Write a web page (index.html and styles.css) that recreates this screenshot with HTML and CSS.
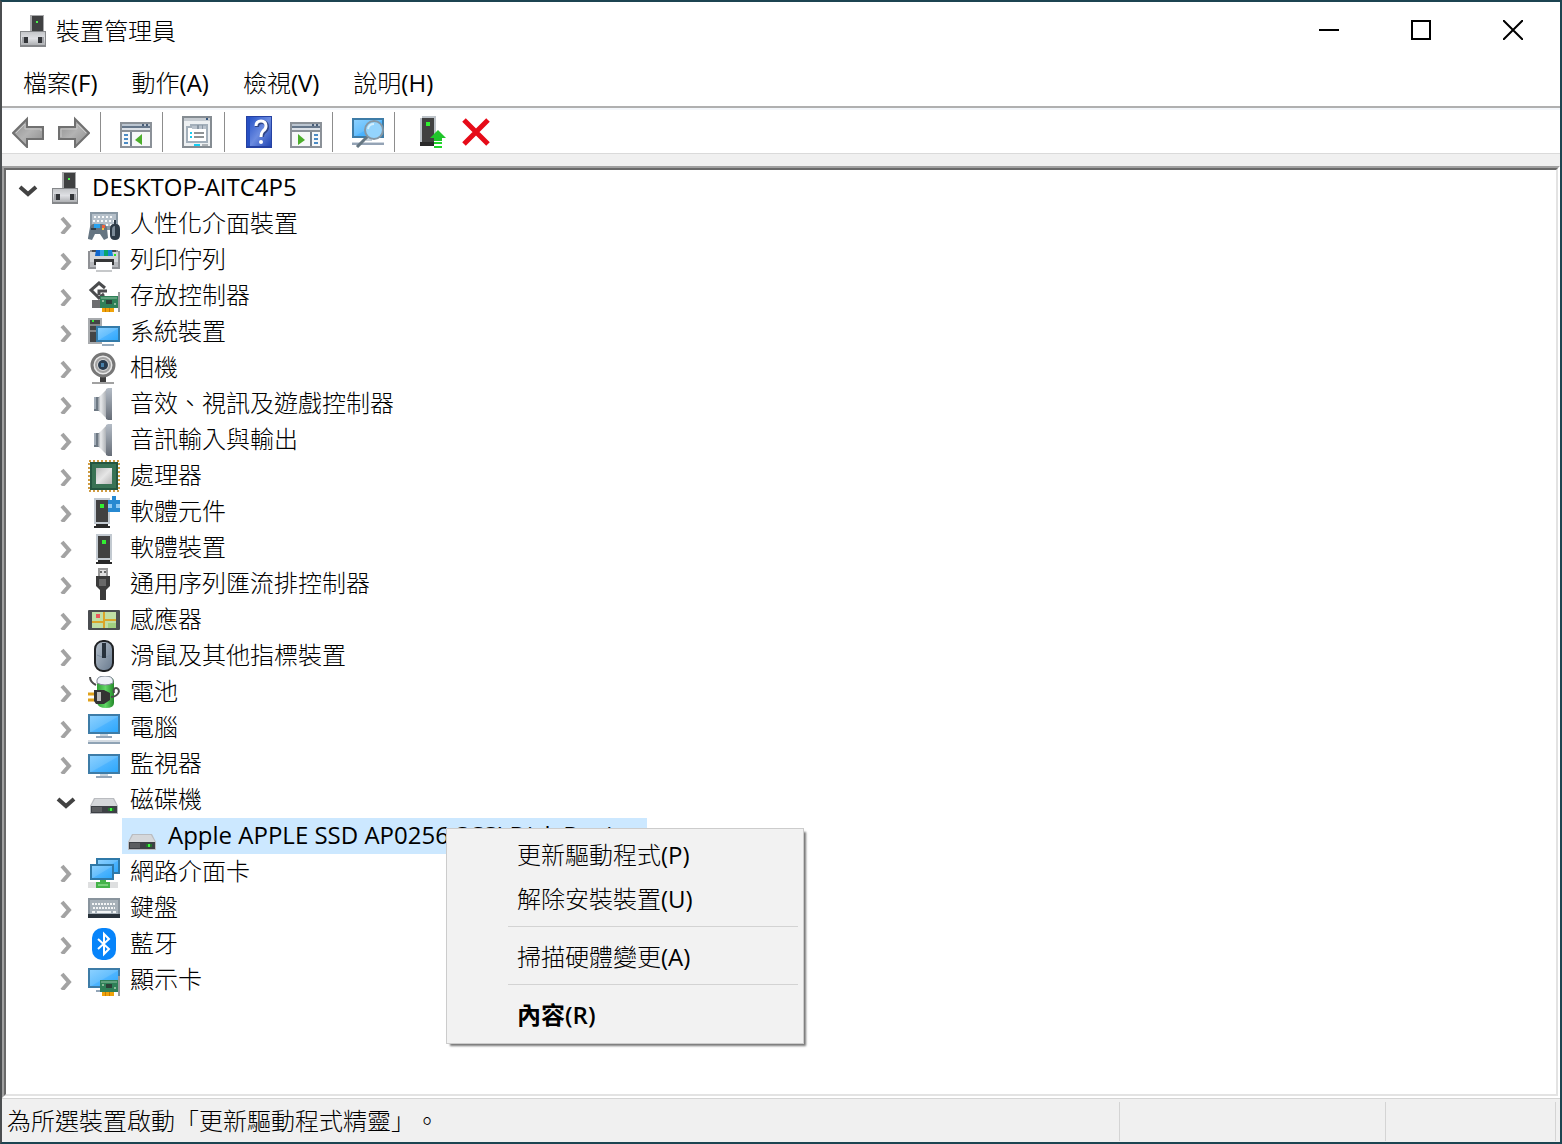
FILE: index.html
```html
<!DOCTYPE html>
<html lang="zh-Hant">
<head>
<meta charset="utf-8">
<meta name="viewport" content="width=device-width, initial-scale=1">
<title>裝置管理員</title>
<link rel="stylesheet" href="styles.css">
</head>
<body>
<svg class="sprite" width="0" height="0" aria-hidden="true">
  <defs>
    <linearGradient id="screen" x1="0" y1="0" x2="1" y2="1"><stop offset="0" stop-color="#8ad0ff"/><stop offset=".5" stop-color="#66bffd"/><stop offset=".54" stop-color="#4db4ff"/><stop offset="1" stop-color="#2ea8fc"/></linearGradient>
    <linearGradient id="silver" x1="0" y1="0" x2="0" y2="1"><stop offset="0" stop-color="#c4c6c9"/><stop offset=".5" stop-color="#dfe0e4"/><stop offset="1" stop-color="#aeb0b3"/></linearGradient>
    <linearGradient id="cone" x1="0" y1="0" x2="1" y2="0"><stop offset="0" stop-color="#8f969e"/><stop offset=".3" stop-color="#e8eaec"/><stop offset="1" stop-color="#a3a7ac"/></linearGradient>
    <linearGradient id="rim" x1="0" y1="0" x2="0" y2="1"><stop offset="0" stop-color="#b4bcc6"/><stop offset="1" stop-color="#666d77"/></linearGradient>
    <linearGradient id="arrow" x1="0" y1="0" x2="1" y2="1"><stop offset="0" stop-color="#8b8b8b"/><stop offset=".5" stop-color="#b3b3b3"/><stop offset="1" stop-color="#8a8a8a"/></linearGradient>
    <linearGradient id="book" x1="0" y1="0" x2="1" y2="1"><stop offset="0" stop-color="#2854c8"/><stop offset=".5" stop-color="#6b8be0"/><stop offset="1" stop-color="#2347b4"/></linearGradient>
    <linearGradient id="die" x1="0" y1="0" x2="1" y2="1"><stop offset="0" stop-color="#bdbdbd"/><stop offset=".5" stop-color="#e6e6e6"/><stop offset="1" stop-color="#b5b5b5"/></linearGradient>
    <linearGradient id="mousebody" x1="0" y1="0" x2="1" y2="1"><stop offset="0" stop-color="#b8c2cd"/><stop offset="1" stop-color="#66788c"/></linearGradient>
    <linearGradient id="green" x1="0" y1="0" x2="1" y2="0"><stop offset="0" stop-color="#2f9f35"/><stop offset=".5" stop-color="#62d766"/><stop offset="1" stop-color="#238829"/></linearGradient>
  </defs>
  <symbol id="i-root" viewBox="0 0 32 32"><path d="M12 0h14v17H12z" fill="#a7a8aa"/><path d="M14 1h11v15H14z" fill="#404142"/><path d="M18 6h2v2h-2z" fill="#4bf34b"/><path d="M2 16h26v16H2z" fill="#85878a"/><path d="M3 17h24v13H3z" fill="url(#silver)"/><path d="M6 22h4v6H6zM20 22h4v6h-4z" fill="#34363a"/><path d="M4 22h2v6H4zM24 22h2v6h-2z" fill="#a2a4a8"/></symbol>
  <symbol id="i-right" viewBox="0 0 20 20"><path d="M6 4l7 8-7 8" fill="none" stroke="#a3a3a3" stroke-width="4"/></symbol>
  <symbol id="i-down" viewBox="0 0 20 20"><path d="M2 9l8 7 8-7" fill="none" stroke="#424242" stroke-width="4"/></symbol>
  <symbol id="i-speaker" viewBox="0 0 32 32"><path d="M6 9h5v14H6z" fill="#6d7883"/><path d="M6 9h2v12H6z" fill="#a3adb8"/><path d="M10 10l9-9v30l-9-9z" fill="url(#cone)"/><path d="M18 1l2-1h4v32h-4l-2-1z" fill="url(#rim)"/></symbol>
  <symbol id="i-disk" viewBox="0 0 32 32"><path d="M6 14h20l4 8v8H2v-8z" fill="#babcc0"/><path d="M7 15h18l4 7H3z" fill="#d5d7da"/><path d="M3 22h26v7H3z" fill="#3d4045"/><path d="M4 23h10v5H4z" fill="#5b5d60"/><path d="M20 24h6v3h-6z" fill="#22742b"/><path d="M22 24h2v3h-2z" fill="#3cf53c"/></symbol>
  <symbol id="i-monitor" viewBox="0 0 32 32"><path d="M0 6h32v20H0z" fill="#3e7ca7"/><path d="M2 8h28v16H2z" fill="url(#screen)"/><path d="M12 26h8v2h-8z" fill="#c9d4dd"/><path d="M8 28h16v2H8z" fill="#93a6b9"/></symbol>
  <symbol id="i-tower" viewBox="0 0 32 32"><path d="M8 2h16v26H8z" fill="#c3cad1"/><path d="M10 4h12v22H10z" fill="#414141"/><path d="M14 8h4v4h-4z" fill="#32ef32"/><path d="M10 28h12v2h2v2H8v-2h2z" fill="#292929"/></symbol>
  <symbol id="i-card" viewBox="0 0 22 20"><path d="M20 0h2v20h-2z" fill="#979a9c"/><path d="M2 4h18v12H2z" fill="#2f8058"/><path d="M3 5h16v2H3z" fill="#60a17d"/><path d="M8 8h6v4H8z" fill="#2d4038"/><path d="M4 8h2v2H4zM16 11h2v2h-2z" fill="#8dbb9b"/><path d="M4 16h12v4H4z" fill="#f0a30a"/><path d="M7 16h1v4H7zM11 16h1v4h-1z" fill="#c87b04"/></symbol>
</svg>

<div class="window">
  <header class="titlebar">
    <svg class="icon" aria-hidden="true"><use href="#i-root"/></svg>
    <h1 class="title">裝置管理員</h1>
    <div class="captions">
      <button class="caption" type="button" aria-label="最小化"><svg viewBox="0 0 20 20"><path d="M0 9h20v2H0z"/></svg></button>
      <button class="caption" type="button" aria-label="最大化"><svg viewBox="0 0 20 20"><path d="M1 1h18v18H1z" fill="none" stroke="#000" stroke-width="2"/></svg></button>
      <button class="caption" type="button" aria-label="關閉"><svg viewBox="0 0 20 20"><path d="M0 0l20 20M20 0L0 20" fill="none" stroke="#000" stroke-width="2"/></svg></button>
    </div>
  </header>

  <nav class="menubar" aria-label="功能表">
    <button class="menu-title" type="button">檔案<span class="latin">(F)</span></button>
    <button class="menu-title" type="button">動作<span class="latin">(A)</span></button>
    <button class="menu-title" type="button">檢視<span class="latin">(V)</span></button>
    <button class="menu-title" type="button">說明<span class="latin">(H)</span></button>
  </nav>

  <div class="toolbar" role="toolbar" aria-label="工具列">
    <div class="tools">
      <button class="tool" type="button" aria-label="上一頁"><svg class="icon" viewBox="0 0 32 32"><path d="M1 17L15 3v8h16v12H15v8z" fill="url(#arrow)" stroke="#707070" stroke-width="2"/><path d="M4 17l9-9v5h16v2" fill="none" stroke="#c8c8c8" stroke-width="1"/></svg></button>
      <button class="tool" type="button" aria-label="下一頁"><svg class="icon" viewBox="0 0 32 32"><path d="M31 17L17 3v8H1v12h16v8z" fill="url(#arrow)" stroke="#707070" stroke-width="2"/><path d="M28 17l-9-9v5H3v8" fill="none" stroke="#c8c8c8" stroke-width="1"/></svg></button>
    </div>
    <div class="tools">
      <button class="tool" type="button" aria-label="顯示/隱藏主控台樹狀目錄"><svg class="icon" viewBox="0 0 32 32"><path d="M0 6h32v26H0z" fill="#8b9198"/><path d="M2 8h28v2H2z" fill="#bcc6d1"/><path d="M2 10h28v2H2z" fill="#66778b"/><path d="M22 8h2v2h-2zM26 8h2v2h-2z" fill="#485d78"/><path d="M2 12h28v2H2z" fill="#dce1e7"/><path d="M2 14h28v2H2z" fill="#8b9198"/><path d="M2 16h28v14H2z" fill="#f7f8f9"/><path d="M10 16h2v14h-2z" fill="#75818d"/><path d="M4 18h4v2H4zM4 22h4v2H4zM4 26h4v2H4z" fill="#4b8bc4"/><path d="M22 18v11l-7-5z" fill="#4cae2b"/></svg></button>
    </div>
    <div class="tools">
      <button class="tool" type="button" aria-label="內容"><svg class="icon" viewBox="0 0 32 32"><path d="M0 0h30v32H0z" fill="#858c92"/><path d="M2 2h26v28H2z" fill="#edf0f2"/><path d="M2 2h26v3H2z" fill="#c5cbd1"/><path d="M24 2h2v2h-2z" fill="#35557c"/><path d="M5 11h4V9h16v17H5z" fill="#fff" stroke="#a3afba" stroke-width="2"/><path d="M10 10h14v3H10z" fill="#bac3cd"/><path d="M15 9h2v4h-2zM20 9h1v4h-1z" fill="#8996a3"/><path d="M8 16h2v2H8zM8 20h2v2H8zM12 28h6v2h-6z" fill="#15cdf2"/><path d="M12 16h10v2H12zM12 20h10v2H12z" fill="#8e9395"/><path d="M20 28h6v2h-6z" fill="#adb2b6"/></svg></button>
    </div>
    <div class="tools">
      <button class="tool" type="button" aria-label="說明"><svg class="icon" viewBox="0 0 32 32"><path d="M2 0h26v32H2z" fill="#2541a2"/><path d="M6 1h21v29H6z" fill="url(#book)"/><path d="M3 1h3v29H3z" fill="#2750c3"/><path d="M13 11q0-5 5-5 5 0 5 5 0 3-3 5-2 2-2 5" fill="none" stroke="#304586" stroke-width="4"/><path d="M12 10q0-5 5-5 5 0 5 5 0 3-3 5-2 2-2 6" fill="none" stroke="#fff" stroke-width="3"/><circle cx="17" cy="26" r="2" fill="#fff"/></svg></button>
      <button class="tool" type="button" aria-label="顯示/隱藏動作窗格"><svg class="icon" viewBox="0 0 32 32"><path d="M0 6h32v26H0z" fill="#8b9198"/><path d="M2 8h28v2H2z" fill="#bcc6d1"/><path d="M2 10h28v2H2z" fill="#66778b"/><path d="M22 8h2v2h-2zM26 8h2v2h-2z" fill="#485d78"/><path d="M2 12h28v2H2z" fill="#dce1e7"/><path d="M2 14h28v2H2z" fill="#8b9198"/><path d="M2 16h28v14H2z" fill="#f7f8f9"/><path d="M20 16h2v14h-2z" fill="#75818d"/><path d="M24 18h4v2h-4zM24 22h4v2h-4zM24 26h4v2h-4z" fill="#4b8bc4"/><path d="M8 18v11l7-5z" fill="#4cae2b"/></svg></button>
    </div>
    <div class="tools">
      <button class="tool" type="button" aria-label="掃描硬體變更"><svg class="icon" viewBox="0 0 32 32"><path d="M0 2h32v20H0z" fill="#3e7ca7"/><path d="M2 4h28v16H2z" fill="url(#screen)"/><path d="M14 22h6v3h-6z" fill="#c3cfd9"/><path d="M0 26h32v3H0z" fill="#94a3b5"/><path d="M0 26h32v1H0z" fill="#ced6df"/><path d="M15 21L5 31" stroke="#667782" stroke-width="3"/><circle cx="22" cy="14" r="9" fill="#94d4fd" stroke="#8597a4" stroke-width="2"/><path d="M16 13q1-5 6-5" fill="none" stroke="#d2effe" stroke-width="2"/></svg></button>
    </div>
    <div class="tools">
      <button class="tool" type="button" aria-label="更新裝置驅動程式"><svg class="icon" viewBox="0 0 32 32"><path d="M6 2h2V0h14v26H6z" fill="#bdc3c9"/><path d="M8 2h12v24H8z" fill="#414141"/><path d="M12 6h4v4h-4z" fill="#2ff12f"/><path d="M6 26h14v4H6z" fill="#292929"/><path d="M24 14l8 8h-4v3h-8v-3h-4z" fill="#20c52a"/><path d="M20 25h8v7h-8z" fill="#fff"/><path d="M20 26h8v2h-8zM20 30h8v2h-8z" fill="#20d52a"/></svg></button>
      <button class="tool" type="button" aria-label="解除安裝裝置"><svg class="icon" viewBox="0 0 32 32"><path d="M4 4l24 24M28 4L4 28" stroke="#e60b18" stroke-width="5"/></svg></button>
    </div>
  </div>

  <main class="pane">
    <ul class="tree" role="tree">
      <li role="treeitem" aria-expanded="true">
        <div class="row"><button class="twisty" type="button" aria-label="摺疊"><svg><use href="#i-down"/></svg></button><svg class="icon"><use href="#i-root"/></svg><span class="label latin">DESKTOP-AITC4P5</span></div>
        <ul class="branch" role="group">
          <li class="row" role="treeitem"><button class="twisty" type="button" aria-label="展開"><svg><use href="#i-right"/></svg></button><svg class="icon" viewBox="0 0 32 32"><path d="M2 4h28v18H2z" fill="#8a99a5"/><path d="M4 6h24v12H4z" fill="#b5c0ca"/><path d="M6 9h20M5 13h22M6 17h20" stroke="#f8fafb" stroke-width="2" stroke-dasharray="2 2"/><path d="M0 30l2-11q2-4 6-3h6q4 0 5 4l1 10-4 2-4-6H7l-3 6-4-1z" fill="#657582"/><path d="M3 20h5v2H3z" fill="#2f3d48"/><path d="M6 16h6v4H6z" fill="#28a2ef"/><path d="M14 17h3v3h-3z" fill="#ed613e"/><path d="M14 20h2v2h-2z" fill="#f6c643"/><path d="M22 21q0-5 4-5V12h2v4q4 0 4 5v6q0 5-5 5t-5-5z" fill="#2d3a46"/><path d="M24 22q0-4 3-4v10h-3z" fill="#7b8a97"/></svg><span class="label">人性化介面裝置</span></li>
          <li class="row" role="treeitem"><button class="twisty" type="button" aria-label="展開"><svg><use href="#i-right"/></svg></button><svg class="icon" viewBox="0 0 32 32"><path d="M0 7h2V6h28v1h2v18H0z" fill="#8f9195"/><path d="M2 8h28v15H2z" fill="#d3d5d8"/><path d="M2 18h28v5H2z" fill="#b6b8bc"/><path d="M4 6h24v2H4z" fill="#4a4c50"/><path d="M8 6h5v6H7z" fill="#0e65ce"/><path d="M12 6h4v6h-4z" fill="#2ea3e7"/><path d="M16 6h4v6h-4z" fill="#09a66b"/><path d="M20 6h4l1 6h-5z" fill="#1383db"/><path d="M26 10h2v2h-2z" fill="#24ed24"/><path d="M6 15h20v6H6z" fill="#353637"/><path d="M8 18h16v10H8z" fill="#fff"/><path d="M8 26h16v2H8z" fill="#c6c8ca"/></svg><span class="label">列印佇列</span></li>
          <li class="row" role="treeitem"><button class="twisty" type="button" aria-label="展開"><svg><use href="#i-right"/></svg></button><svg class="icon" viewBox="0 0 32 32"><path d="M4 20h12v8H4z" fill="#6d6e70"/><path d="M17 8l-6-5-8 7 8 8 5-4M19 11h-8v4" fill="none" stroke="#4b4c4e" stroke-width="3"/><use href="#i-card" x="10" y="12" width="22" height="20"/></svg><span class="label">存放控制器</span></li>
          <li class="row" role="treeitem"><button class="twisty" type="button" aria-label="展開"><svg><use href="#i-right"/></svg></button><svg class="icon" viewBox="0 0 32 32"><path d="M0 2h14v26H0z" fill="#a8abae"/><path d="M2 4h10v22H2z" fill="#444546"/><path d="M4 4h2v2H4z" fill="#34e934"/><path d="M2 8h10v2H2zM2 14h6v2H2z" fill="#858789"/><path d="M8 10h24v16H8z" fill="#347ba9"/><path d="M10 12h20v12H10z" fill="url(#screen)"/><path d="M14 28h12v2H14z" fill="#95aabd"/></svg><span class="label">系統裝置</span></li>
          <li class="row" role="treeitem"><button class="twisty" type="button" aria-label="展開"><svg><use href="#i-right"/></svg></button><svg class="icon" viewBox="0 0 32 32"><path d="M12 25h6v5h-6z" fill="#3d3d3d"/><path d="M4 30h22v2H4z" fill="#a1a1a1"/><circle cx="15" cy="13" r="11" fill="#e7e7e7" stroke="#777" stroke-width="3"/><circle cx="15" cy="13" r="7" fill="#d4d4d4" stroke="#a3a3a3" stroke-width="2"/><circle cx="15" cy="13" r="5" fill="#283a4d"/><path d="M13 11h3v4h-3z" fill="#477fa9"/></svg><span class="label">相機</span></li>
          <li class="row" role="treeitem"><button class="twisty" type="button" aria-label="展開"><svg><use href="#i-right"/></svg></button><svg class="icon"><use href="#i-speaker"/></svg><span class="label">音效、視訊及遊戲控制器</span></li>
          <li class="row" role="treeitem"><button class="twisty" type="button" aria-label="展開"><svg><use href="#i-right"/></svg></button><svg class="icon"><use href="#i-speaker"/></svg><span class="label">音訊輸入與輸出</span></li>
          <li class="row" role="treeitem"><button class="twisty" type="button" aria-label="展開"><svg><use href="#i-right"/></svg></button><svg class="icon" viewBox="0 0 32 32"><path d="M1 1h30v30H1z" fill="none" stroke="#cf9c43" stroke-width="2" stroke-dasharray="2 2"/><path d="M2 2h28v28H2z" fill="#245640"/><path d="M4 4h24v24H4z" fill="#397254"/><path d="M8 8h16v16H8z" fill="url(#die)"/></svg><span class="label">處理器</span></li>
          <li class="row" role="treeitem"><button class="twisty" type="button" aria-label="展開"><svg><use href="#i-right"/></svg></button><svg class="icon" viewBox="0 0 32 32"><use href="#i-tower" x="-2" y="0" width="32" height="32"/><path d="M20 4h4V0h4v4h4v12H20z" fill="#2789d1"/><path d="M20 8h4v4h-4zM28 8h4v4h-4z" fill="#8fcaf3"/></svg><span class="label">軟體元件</span></li>
          <li class="row" role="treeitem"><button class="twisty" type="button" aria-label="展開"><svg><use href="#i-right"/></svg></button><svg class="icon"><use href="#i-tower"/></svg><span class="label">軟體裝置</span></li>
          <li class="row" role="treeitem"><button class="twisty" type="button" aria-label="展開"><svg><use href="#i-right"/></svg></button><svg class="icon" viewBox="0 0 32 32"><path d="M10 0h10v9H10z" fill="#9a9a9a"/><path d="M12 2h6v6h-6z" fill="#dfdfdf"/><path d="M12 3h2v2h-2zM16 3h2v2h-2z" fill="#686868"/><path d="M8 8h14v10l-4 4v10h-6V22l-4-4z" fill="#3b3b3b"/><path d="M11 11h7v7h-7z" fill="#686868"/></svg><span class="label">通用序列匯流排控制器</span></li>
          <li class="row" role="treeitem"><button class="twisty" type="button" aria-label="展開"><svg><use href="#i-right"/></svg></button><svg class="icon" viewBox="0 0 32 32"><rect y="6" width="32" height="20" rx="1" fill="#4a4d50"/><path d="M4 8h24v16H4z" fill="#c0dea5"/><path d="M16 8v16M4 18h12v-2h12M4 18h5" fill="none" stroke="#dba529" stroke-width="2"/><path d="M8 10h4v4H8z" fill="#eb555b"/><path d="M20 19h8v5h-8z" fill="#a1cf80"/></svg><span class="label">感應器</span></li>
          <li class="row" role="treeitem"><button class="twisty" type="button" aria-label="展開"><svg><use href="#i-right"/></svg></button><svg class="icon" viewBox="0 0 32 32"><rect x="7" y="1" width="18" height="30" rx="8" fill="url(#mousebody)" stroke="#202225" stroke-width="2"/><path d="M9 15q7 4 14 0" fill="none" stroke="#7d8fa2"/><path d="M14 3h4v15h-4z" fill="#27313b"/></svg><span class="label">滑鼠及其他指標裝置</span></li>
          <li class="row" role="treeitem"><button class="twisty" type="button" aria-label="展開"><svg><use href="#i-right"/></svg></button><svg class="icon" viewBox="0 0 32 32"><path d="M9 5q0-5 8-5t9 5v22q0 5-8 5t-9-5z" fill="url(#green)"/><path d="M9 7V4q1-4 8-4t8 4v3q-8 4-16 0z" fill="#eef1f7" stroke="#85879a"/><path d="M2 1q0 5 6 8M23 21c10-1 9-9 5-9q-3 0-2 5" fill="none" stroke="#4c4c4c" stroke-width="2"/><path d="M0 18h8M0 24h8" stroke="#e0a11b" stroke-width="3"/><path d="M6 14h10l6 3v7l-6 4H8l-2-3z" fill="#333"/><path d="M9 16h4v9H9z" fill="#bcbcbc"/></svg><span class="label">電池</span></li>
          <li class="row" role="treeitem"><button class="twisty" type="button" aria-label="展開"><svg><use href="#i-right"/></svg></button><svg class="icon" viewBox="0 0 32 32"><use href="#i-monitor" y="-4" width="32" height="32"/><path d="M0 28h32v4H0z" fill="#d5dce3"/><path d="M0 30h32v2H0z" fill="#8fa3b5"/></svg><span class="label">電腦</span></li>
          <li class="row" role="treeitem"><button class="twisty" type="button" aria-label="展開"><svg><use href="#i-right"/></svg></button><svg class="icon"><use href="#i-monitor"/></svg><span class="label">監視器</span></li>
          <li role="treeitem" aria-expanded="true">
            <div class="row"><button class="twisty" type="button" aria-label="摺疊"><svg><use href="#i-down"/></svg></button><svg class="icon"><use href="#i-disk"/></svg><span class="label">磁碟機</span></div>
            <div class="leaf">
              <div class="row selected" role="treeitem" aria-selected="true"><svg class="icon"><use href="#i-disk"/></svg><span class="label latin">Apple APPLE SSD AP0256 SCSI Disk Device</span></div>
              <div class="context-menu" role="menu">
                <button class="command" type="button" role="menuitem">更新驅動程式<span class="latin">(P)</span></button>
                <button class="command" type="button" role="menuitem">解除安裝裝置<span class="latin">(U)</span></button>
                <hr class="divider">
                <button class="command" type="button" role="menuitem">掃描硬體變更<span class="latin">(A)</span></button>
                <hr class="divider">
                <button class="command default" type="button" role="menuitem">內容<span class="latin">(R)</span></button>
              </div>
            </div>
          </li>
          <li class="row" role="treeitem"><button class="twisty" type="button" aria-label="展開"><svg><use href="#i-right"/></svg></button><svg class="icon" viewBox="0 0 32 32"><path d="M8 2h24v16H8z" fill="#2f79a8"/><path d="M10 4h20v12H10z" fill="url(#screen)"/><path d="M2 8h24v16H2z" fill="#2f79a8"/><path d="M4 10h20v12H4z" fill="url(#screen)"/><path d="M0 26h30v6H0z" fill="#dedfe0"/><path d="M12 24h6v2h4v6H8v-6h4z" fill="#44b349"/><path d="M10 28h10v2H10z" fill="#79d17b"/></svg><span class="label">網路介面卡</span></li>
          <li class="row" role="treeitem"><button class="twisty" type="button" aria-label="展開"><svg><use href="#i-right"/></svg></button><svg class="icon" viewBox="0 0 32 32"><path d="M0 6h32v20H0z" fill="#89949d"/><path d="M2 8h28v14H2z" fill="#a7b1b9"/><path d="M4 12h24M5 16h22" stroke="#f3f5f6" stroke-width="2" stroke-dasharray="2 1"/><path d="M4 20h3M9 20h14M25 20h3" stroke="#f3f5f6" stroke-width="2"/><path d="M0 22h32v4H0z" fill="#28313a"/></svg><span class="label">鍵盤</span></li>
          <li class="row" role="treeitem"><button class="twisty" type="button" aria-label="展開"><svg><use href="#i-right"/></svg></button><svg class="icon" viewBox="0 0 32 32"><rect x="4" width="24" height="32" rx="10" fill="#0784fa"/><path d="M10 11l11 10-5 5V6l5 5-11 10" fill="none" stroke="#fff" stroke-width="2"/></svg><span class="label">藍牙</span></li>
          <li class="row" role="treeitem"><button class="twisty" type="button" aria-label="展開"><svg><use href="#i-right"/></svg></button><svg class="icon" viewBox="0 0 32 32"><path d="M0 4h32v20H0z" fill="#3e7ca7"/><path d="M2 6h28v16H2z" fill="url(#screen)"/><path d="M8 26h6v2H8z" fill="#93a6b9"/><use href="#i-card" x="10" y="12" width="22" height="20"/></svg><span class="label">顯示卡</span></li>
        </ul>
      </li>
    </ul>
  </main>

  <footer class="statusbar">
    <div class="status">為所選裝置啟動「更新驅動程式精靈」。</div>
    <div class="status"></div>
    <div class="status"></div>
  </footer>
</div>
</body>
</html>
```
FILE: styles.css
```css
* {
  box-sizing: border-box;
}

body {
  margin: 0;
  font-family: "Noto Sans CJK TC", sans-serif;
  font-size: 24px;
  font-weight: 300;
  line-height: 36px;
  color: #000;
  text-spacing-trim: space-all;
}

ul {
  margin: 0;
  padding: 0;
  list-style: none;
}

button {
  margin: 0;
  padding: 0;
  border: 0;
  background: none;
  color: inherit;
  font: inherit;
}

.sprite {
  position: absolute;
}

.latin {
  font-family: "Open Sans", sans-serif;
  font-weight: 400;
}

.icon {
  display: block;
  flex: none;
  width: 32px;
  height: 32px;
}

.window {
  display: flex;
  flex-direction: column;
  min-height: 100vh;
  border: 2px solid #1c4451;
  border-left-color: #4b4e50;
  background: #fff;
}

/* Title bar */
.titlebar {
  display: flex;
  align-items: center;
  height: 58px;
  padding: 0 1px 0 16px;
}

.title {
  flex: 1;
  margin: 0 0 0 6px;
  padding-bottom: 2px;
  font-size: 24px;
  font-weight: 300;
}

.captions {
  display: flex;
  align-self: flex-start;
}

.caption {
  display: grid;
  place-items: center;
  width: 92px;
  height: 56px;
}

.caption svg {
  display: block;
  width: 20px;
  height: 20px;
}

/* Menu bar */
.menubar {
  display: flex;
  height: 48px;
  padding: 0 4px;
  border-bottom: 2px solid #b0b0b0;
}

.menu-title {
  padding: 0 17px 2px;
}

/* Toolbar */
.toolbar {
  display: flex;
  padding: 2px 0 1px;
  border-top: 2px solid #f4f7fb;
  border-bottom: 1px solid #dadada;
}

.tools {
  display: flex;
  align-items: center;
  gap: 14px;
  height: 40px;
  padding: 0 10px 0 19px;
  border-right: 1px solid #8d8d8d;
}

.tools:first-child {
  padding-left: 10px;
}

.tools:last-child {
  border-right: 0;
}

/* Tree */
.pane {
  display: grid;
  flex: 1;
  margin-top: 12px;
  border: 2px solid;
  border-color: #a0a0a0 #fff #fff #a0a0a0;
  box-shadow: 0 -12px #f0f0f0;
}

.tree {
  border: 2px solid;
  border-color: #696969 #e3e3e3 #e3e3e3 #696969;
}

.branch {
  padding-left: 38px;
}

.row {
  display: flex;
  align-items: center;
  height: 36px;
}

.label {
  margin-left: 10px;
  padding-bottom: 4px;
  white-space: nowrap;
}

.label.latin {
  padding-bottom: 2px;
}

.twisty {
  display: grid;
  place-items: center;
  flex: none;
  width: 44px;
  height: 36px;
}

.twisty svg {
  display: block;
  width: 20px;
  height: 20px;
}

.leaf {
  position: relative;
  display: flex;
  padding-left: 78px;
}

.selected {
  padding: 0 10px 0 4px;
  background: #cce8ff;
}

/* Context menu */
.context-menu {
  position: absolute;
  z-index: 1;
  top: 10px;
  left: 402px;
  width: 358px;
  padding: 5px;
  border: 1px solid #ccc;
  background: #f2f2f2;
  box-shadow: 3px 3px 2px -1px #777;
}

.command {
  display: block;
  width: 100%;
  height: 44px;
  padding: 0 0 4px 65px;
  text-align: left;
}

.default,
.default .latin {
  font-weight: 600;
}

.divider {
  height: 1px;
  margin: 4px 0 9px 56px;
  border: 0;
  background: #d3d3d3;
}

/* Status bar */
.statusbar {
  display: grid;
  grid-template-columns: 1fr 266px 170px;
  height: 44px;
  padding: 3px 4px 1px 0;
  border-top: 1px solid #d4d4d4;
  background: #f0f0f0;
}

.status {
  padding-left: 5px;
  border-right: 1px solid #d4d4d4;
  white-space: nowrap;
}
```
